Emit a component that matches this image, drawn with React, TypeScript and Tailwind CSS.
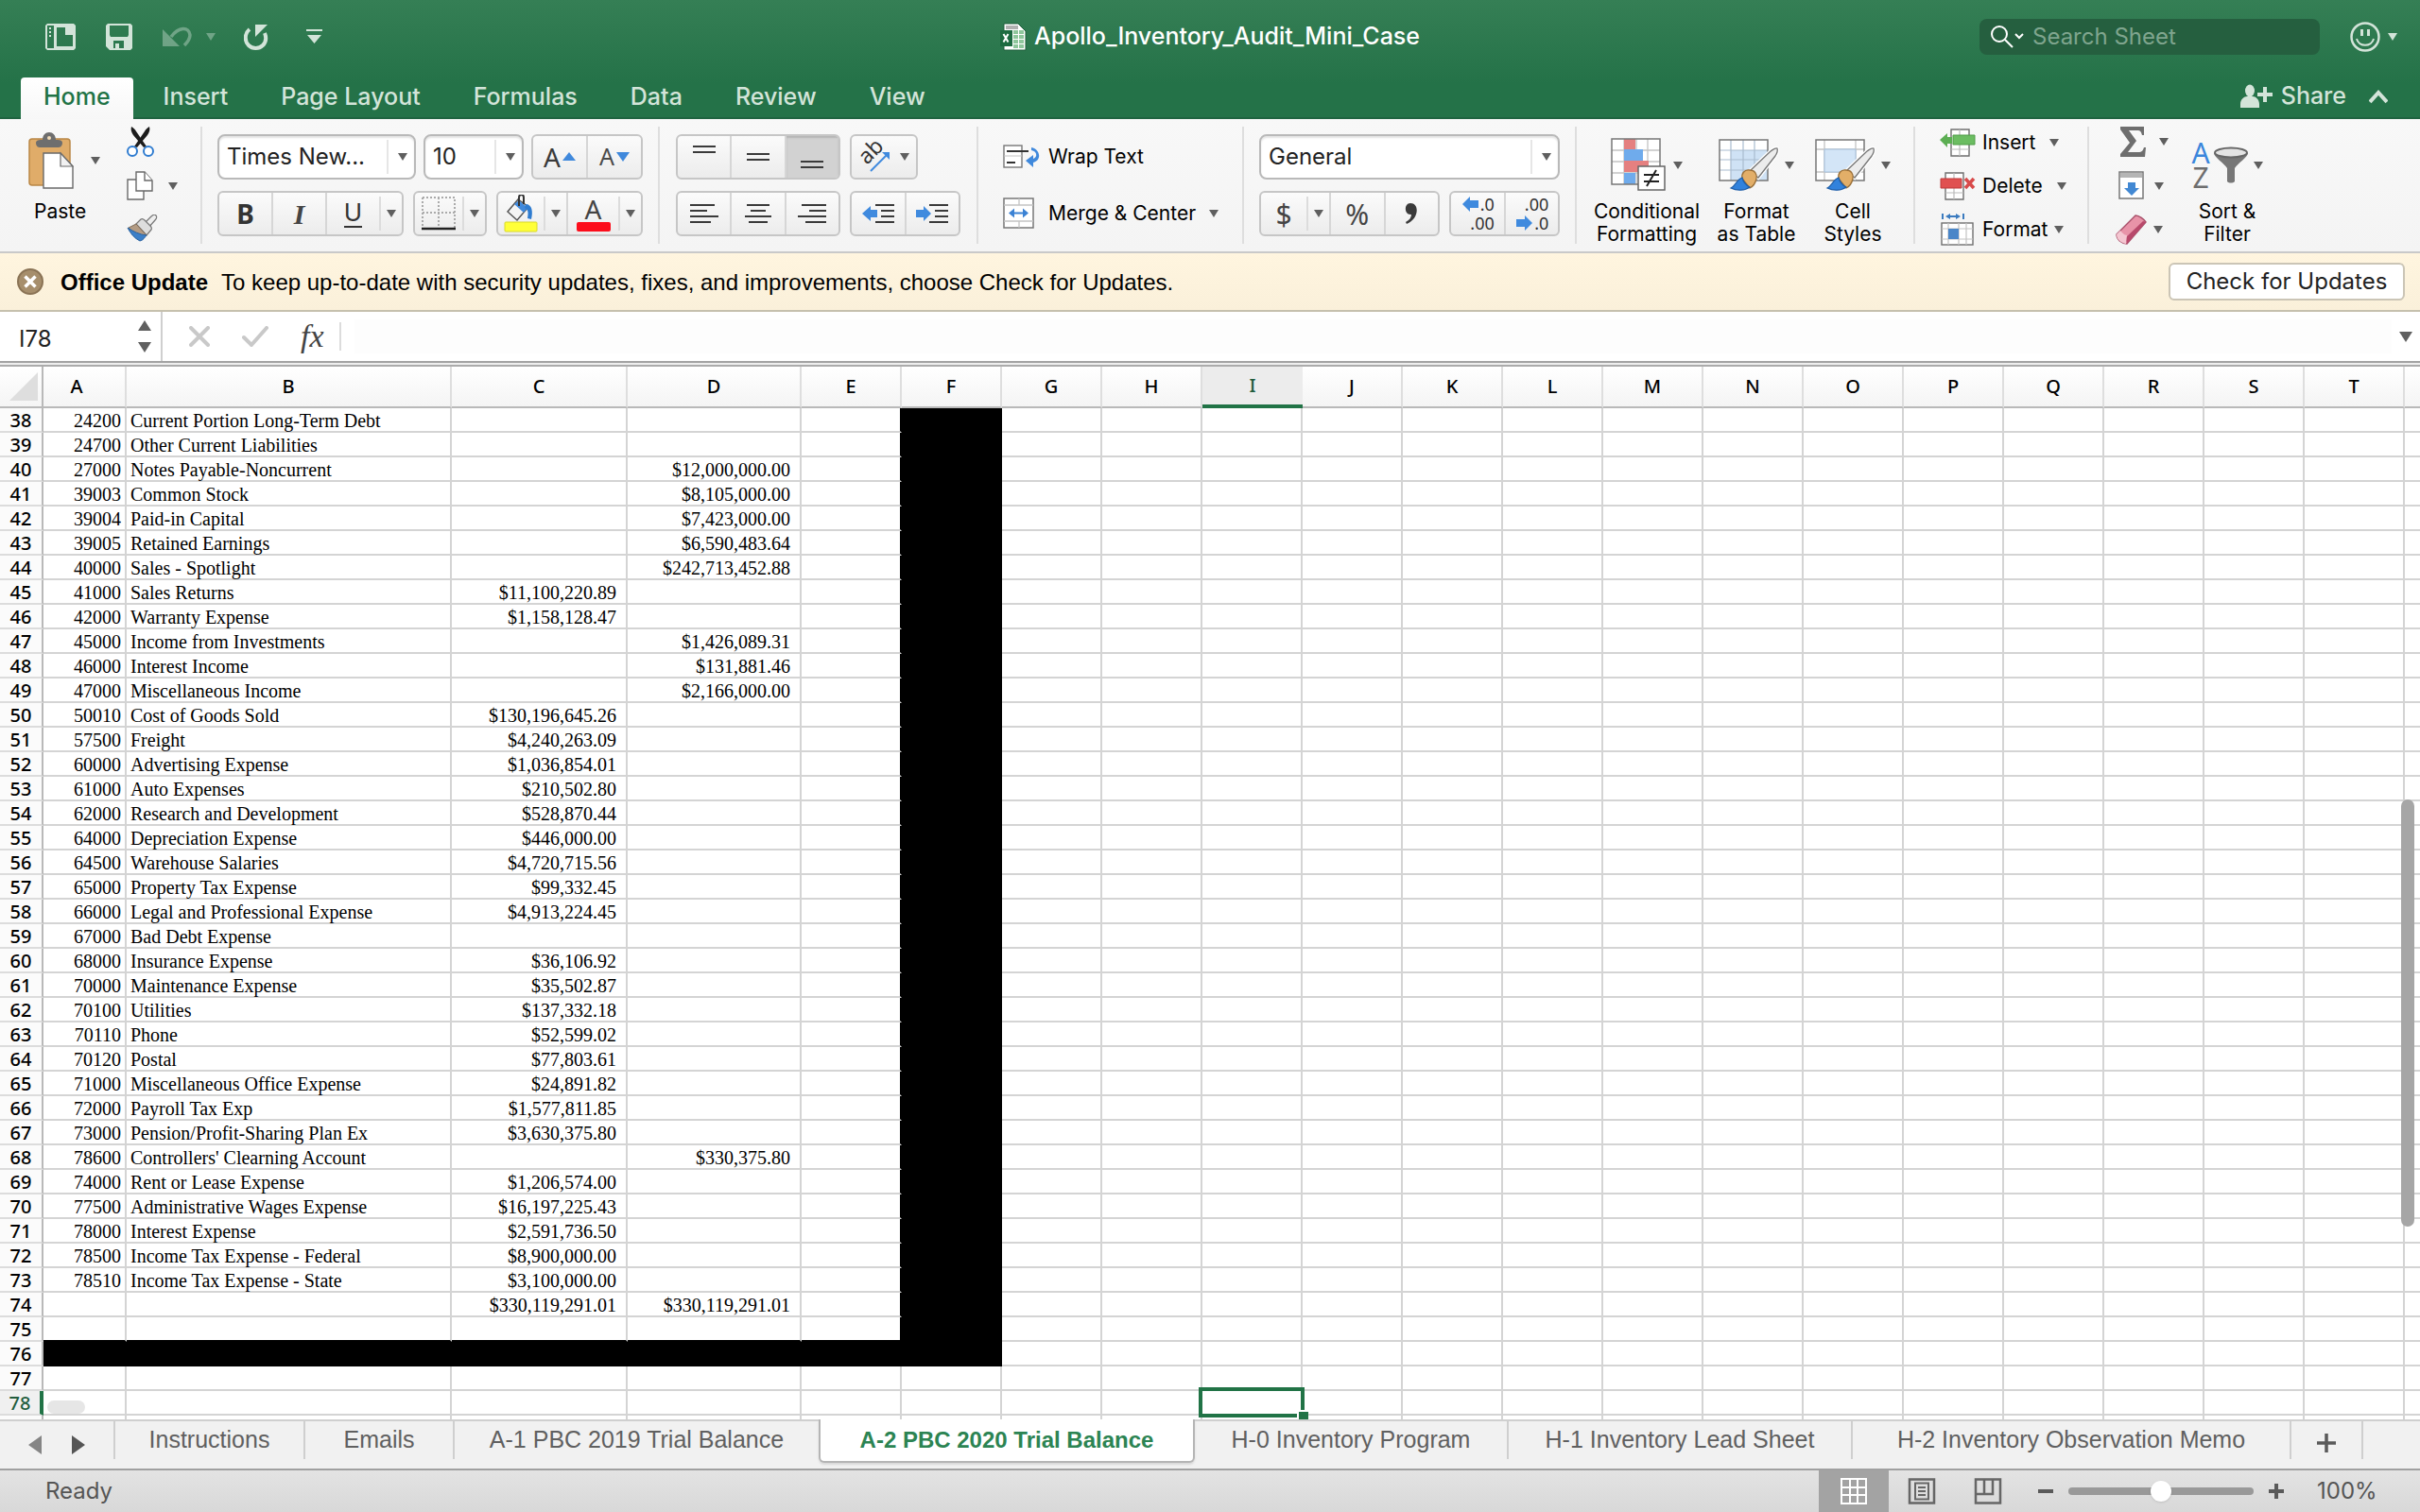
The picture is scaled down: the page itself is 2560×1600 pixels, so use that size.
import React from 'react';
import { clsx } from 'clsx';

type Row = { n: number; acct?: string; name?: string; debit?: string; credit?: string };

const rows: Row[] = [
  { n: 38, acct: '24200', name: 'Current Portion Long-Term Debt' },
  { n: 39, acct: '24700', name: 'Other Current Liabilities' },
  { n: 40, acct: '27000', name: 'Notes Payable-Noncurrent', credit: '$12,000,000.00' },
  { n: 41, acct: '39003', name: 'Common Stock', credit: '$8,105,000.00' },
  { n: 42, acct: '39004', name: 'Paid-in Capital', credit: '$7,423,000.00' },
  { n: 43, acct: '39005', name: 'Retained Earnings', credit: '$6,590,483.64' },
  { n: 44, acct: '40000', name: 'Sales - Spotlight', credit: '$242,713,452.88' },
  { n: 45, acct: '41000', name: 'Sales Returns', debit: '$11,100,220.89' },
  { n: 46, acct: '42000', name: 'Warranty Expense', debit: '$1,158,128.47' },
  { n: 47, acct: '45000', name: 'Income from Investments', credit: '$1,426,089.31' },
  { n: 48, acct: '46000', name: 'Interest Income', credit: '$131,881.46' },
  { n: 49, acct: '47000', name: 'Miscellaneous Income', credit: '$2,166,000.00' },
  { n: 50, acct: '50010', name: 'Cost of Goods Sold', debit: '$130,196,645.26' },
  { n: 51, acct: '57500', name: 'Freight', debit: '$4,240,263.09' },
  { n: 52, acct: '60000', name: 'Advertising Expense', debit: '$1,036,854.01' },
  { n: 53, acct: '61000', name: 'Auto Expenses', debit: '$210,502.80' },
  { n: 54, acct: '62000', name: 'Research and Development', debit: '$528,870.44' },
  { n: 55, acct: '64000', name: 'Depreciation Expense', debit: '$446,000.00' },
  { n: 56, acct: '64500', name: 'Warehouse Salaries', debit: '$4,720,715.56' },
  { n: 57, acct: '65000', name: 'Property Tax Expense', debit: '$99,332.45' },
  { n: 58, acct: '66000', name: 'Legal and Professional Expense', debit: '$4,913,224.45' },
  { n: 59, acct: '67000', name: 'Bad Debt Expense' },
  { n: 60, acct: '68000', name: 'Insurance Expense', debit: '$36,106.92' },
  { n: 61, acct: '70000', name: 'Maintenance Expense', debit: '$35,502.87' },
  { n: 62, acct: '70100', name: 'Utilities', debit: '$137,332.18' },
  { n: 63, acct: '70110', name: 'Phone', debit: '$52,599.02' },
  { n: 64, acct: '70120', name: 'Postal', debit: '$77,803.61' },
  { n: 65, acct: '71000', name: 'Miscellaneous Office Expense', debit: '$24,891.82' },
  { n: 66, acct: '72000', name: 'Payroll Tax Exp', debit: '$1,577,811.85' },
  { n: 67, acct: '73000', name: 'Pension/Profit-Sharing Plan Ex', debit: '$3,630,375.80' },
  { n: 68, acct: '78600', name: "Controllers' Clearning Account", credit: '$330,375.80' },
  { n: 69, acct: '74000', name: 'Rent or Lease Expense', debit: '$1,206,574.00' },
  { n: 70, acct: '77500', name: 'Administrative Wages Expense', debit: '$16,197,225.43' },
  { n: 71, acct: '78000', name: 'Interest Expense', debit: '$2,591,736.50' },
  { n: 72, acct: '78500', name: 'Income Tax Expense - Federal', debit: '$8,900,000.00' },
  { n: 73, acct: '78510', name: 'Income Tax Expense - State', debit: '$3,100,000.00' },
  { n: 74, debit: '$330,119,291.01', credit: '$330,119,291.01' },
  { n: 75 },
  { n: 76 },
  { n: 77 },
  { n: 78 },
];

const columns = 'ABCDEFGHIJKLMNOPQRST'.split('');
const columnWidths = [88, 344, 186, 184];
const menuTabs = ['Home', 'Insert', 'Page Layout', 'Formulas', 'Data', 'Review', 'View'];

const sheets = [
  { label: 'Instructions', width: 'w-[201px]' },
  { label: 'Emails', width: 'w-[158px]' },
  { label: 'A-1 PBC 2019 Trial Balance', width: 'w-[385px]' },
  { label: 'A-2 PBC 2020 Trial Balance', width: 'w-[398px]' },
  { label: 'H-0 Inventory Program', width: 'w-[332px]' },
  { label: 'H-1 Inventory Lead Sheet', width: 'w-[364px]' },
  { label: 'H-2 Inventory Observation Memo', width: 'w-[464px]' },
];

/* ---------- small pieces ---------- */

function Caret({ className = 'text-[#5f5f5f]' }: { className?: string }) {
  return (
    <svg width="10" height="8" viewBox="0 0 10 8" className={clsx('shrink-0', className)}>
      <path d="M0 0h10L5 8z" fill="currentColor" />
    </svg>
  );
}

function Sep() {
  return <div className="mt-2 h-[124px] w-0.5 shrink-0 bg-[#dedede]" />;
}

function Segments({ children, className }: { children: React.ReactNode; className?: string }) {
  return (
    <div className={clsx('flex h-12 shrink-0 overflow-hidden rounded-md border-2 border-[#c6c6c6] bg-linear-to-b from-[#fbfbfb] to-[#ececec]', className)}>
      {children}
    </div>
  );
}

interface SegProps {
  label: string;
  children: React.ReactNode;
  className?: string;
  first?: boolean;
  pressed?: boolean;
}

function Seg({ label, children, className = 'flex-1', first, pressed }: SegProps) {
  return (
    <button
      aria-label={label}
      className={clsx('flex min-w-0 items-center justify-center', !first && 'border-l-2 border-[#d6d6d6]', pressed && 'bg-[#d2d2d2] shadow-[inset_0_2px_2px_#b5b5b5]', className)}
    >
      {children}
    </button>
  );
}

function DropArrow({ label }: { label: string }) {
  return (
    <button aria-label={label} className="my-1 flex w-6 shrink-0 items-center justify-center border-l-2 border-[#dcdcdc]">
      <Caret />
    </button>
  );
}

function Combo({ label, value, className }: { label: string; value: string; className: string }) {
  return (
    <div className={clsx('relative h-12 shrink-0', className)}>
      <select
        aria-label={label}
        className="h-full w-full appearance-none rounded-lg border-2 border-[#b9b9b9] bg-white pl-2 text-[24px] text-[#222] shadow-[inset_0_2px_2px_#e4e4e4]"
      >
        <option>{value}</option>
      </select>
      <div className="pointer-events-none absolute inset-y-1.5 right-0 flex w-[31px] items-center justify-center border-l-2 border-[#e6e6e6]">
        <Caret />
      </div>
    </div>
  );
}

function Lines({ rows }: { rows: [number, number][] }) {
  return (
    <svg width="32" height="28" viewBox="0 0 32 28" stroke="#3a3a3a" strokeWidth="2">
      {rows.map(([x1, x2], i) => (
        <path key={i} d={`M${x1} ${5 + i * 6}H${x2}`} />
      ))}
    </svg>
  );
}

function VLines({ y }: { y: number }) {
  return (
    <svg width="24" height="40" viewBox="0 0 24 40" stroke="#3a3a3a" strokeWidth="2">
      <path d={`M0 ${y}h24M0 ${y + 6}h24`} />
    </svg>
  );
}

/* ---------- icons ---------- */

function PasteIcon() {
  return (
    <svg width="48" height="60" viewBox="0 0 48 60">
      <rect x="1" y="7" width="43" height="49" rx="3" fill="#e0ac69" stroke="#b98746" strokeWidth="1.5" />
      <path d="M8 11c0-2 2-3 5-3h2c0-5 3-8 7-8s7 3 7 8h2c3 0 5 1 5 3s-1 5-4 5H12c-3 0-4-3-4-5z" fill="#6e6e6e" />
      <circle cx="22" cy="6" r="2" fill="#f3dcb8" />
      <path d="M16 22h18l13 14v23H16z" fill="#fff" stroke="#6a6a6a" strokeWidth="1.4" />
      <path d="M34 22v14h13z" fill="#f2f2f2" stroke="#6a6a6a" strokeWidth="1.2" />
    </svg>
  );
}

function ScissorsIcon() {
  return (
    <svg width="30" height="32" viewBox="0 0 30 32">
      <path d="M5 0c2 1 4 3 5 5l11 16-3 1L7 9C5 6 4 3 5 0z" fill="#1c1c1c" />
      <path d="M24 0c-2 1-4 3-5 5L8 21l3 1L22 9c2-3 3-6 2-9z" fill="#1c1c1c" />
      <circle cx="6" cy="26" r="5" fill="#fff" stroke="#2f7cd0" strokeWidth="2" />
      <circle cx="23" cy="26" r="5" fill="#fff" stroke="#2f7cd0" strokeWidth="2" />
    </svg>
  );
}

function CopyIcon() {
  return (
    <svg width="28" height="31" viewBox="0 0 28 31" fill="#fff" stroke="#6a6a6a" strokeWidth="1.4">
      <path d="M1 9h17v21H1z" />
      <path d="M10 1h9l8 9v11H10z" />
      <path d="M19 1v9h8" />
    </svg>
  );
}

function PainterIcon() {
  return (
    <svg width="34" height="30" viewBox="0 0 34 30">
      <path d="M19 9l7-7c2-2 4-2 5-1s1 3-1 5l-7 8z" fill="#eee" stroke="#777" strokeWidth="1.2" />
      <path d="M10 10l5-5c2-1 3 0 4 1l6 6c1 1 2 3 1 4l-5 6z" fill="#ddd" stroke="#777" strokeWidth="1.2" />
      <path d="M10 10l11 12-4 2C11 21 6 18 2 14z" fill="#b39b83" stroke="#7d6b58" />
      <path d="M1 14c6 4 12 7 20 8-2 2-3 5-7 6C8 25 4 20 1 14z" fill="#3b7fc8" stroke="#2a62a0" />
    </svg>
  );
}

function BrushOverlay() {
  return (
    <g>
      <path d="M62 12c1 3 0 5-2 8L42 43l-9-7 22-21c3-2 5-4 7-3z" fill="#eee" stroke="#fff" strokeWidth="4" />
      <path d="M62 12c1 3 0 5-2 8L42 43l-9-7 22-21c3-2 5-4 7-3z" fill="#ececec" stroke="#777" strokeWidth="1.3" />
      <path d="M25 44c-1-5 2-10 8-9 5 0 8 4 7 9-1 5-3 8-7 10z" fill="#e2ae68" stroke="#9b7038" strokeWidth="1.3" />
      <path d="M25 43c1 4 4 8 8 10-5 4-14 4-20 1 5-2 6-9 12-11z" fill="#3182dc" stroke="#1f5ea8" strokeWidth="1.2" />
    </g>
  );
}

function ConditionalIcon() {
  return (
    <svg width="60" height="58" viewBox="0 0 60 58">
      <rect x="1" y="1" width="51" height="48" fill="#fff" />
      <path d="M14 1v48M39 1v48M27 1v48M1 13h51M1 25h51M1 37h51" stroke="#c4c4c4" strokeWidth="1.3" />
      <path d="M14 1h12v11H14zM14 24h26v12H14z" fill="#e58080" />
      <path d="M14 12h20v12H14zM14 37h12v12H14z" fill="#6fabec" />
      <rect x="1" y="1" width="51" height="48" fill="none" stroke="#777" strokeWidth="1.5" />
      <rect x="29" y="30" width="28" height="25" fill="#fff" stroke="#666" strokeWidth="1.5" />
      <path d="M35 39h16M35 46h16M48 34l-10 17" stroke="#222" strokeWidth="2" />
    </svg>
  );
}

function TableIcon() {
  return (
    <svg width="64" height="60" viewBox="0 0 64 60">
      <rect x="1" y="3" width="51" height="43" fill="#fff" />
      <path d="M13 14h39v32H13z" fill="#cfe2f5" />
      <path d="M13 3v43M26 3v43M38 3v43M1 14h51M1 24h51M1 35h51" stroke="#a9bccf" strokeWidth="1.2" />
      <rect x="1" y="3" width="51" height="43" fill="none" stroke="#777" strokeWidth="1.5" />
      <BrushOverlay />
    </svg>
  );
}

function StylesIcon() {
  return (
    <svg width="64" height="60" viewBox="0 0 64 60">
      <rect x="1" y="3" width="51" height="43" fill="#fff" />
      <path d="M10 3v43M43 3v43M1 13h51M1 37h51" stroke="#c4c4c4" strokeWidth="1.3" />
      <path d="M10 13h33v24H10z" fill="#d3e5f7" stroke="#a5c0dc" />
      <rect x="1" y="3" width="51" height="43" fill="none" stroke="#777" strokeWidth="1.5" />
      <BrushOverlay />
    </svg>
  );
}

function InsertCellsIcon() {
  return (
    <svg width="38" height="30" viewBox="0 0 38 30">
      <path d="M12 1h19v28H12z" fill="#fff" stroke="#6f6f6f" strokeWidth="1.4" />
      <path d="M21 1v28M12 22h19" stroke="#bbb" strokeWidth="1.2" />
      <path d="M0 12l8-7v4h5v7H8v4z" fill="#5cae53" />
      <path d="M14 7h23v10H14z" fill="#6cbd62" stroke="#4e9c46" />
    </svg>
  );
}

function DeleteCellsIcon() {
  return (
    <svg width="38" height="30" viewBox="0 0 38 30">
      <path d="M6 1h19v28H6z" fill="#fff" stroke="#6f6f6f" strokeWidth="1.4" />
      <path d="M15 1v28M6 22h19" stroke="#bbb" strokeWidth="1.2" />
      <path d="M1 7h22v10H1z" fill="#e05151" stroke="#bd3a3a" />
      <path d="M27 7l9 10M36 7l-9 10" stroke="#d84a4a" strokeWidth="3.5" />
    </svg>
  );
}

function FormatCellsIcon() {
  return (
    <svg width="38" height="34" viewBox="0 0 38 34">
      <path d="M3 0v6M25 0v6" stroke="#3b7bbf" strokeWidth="2" />
      <path d="M6 3l5-3v2h6V0l5 3-5 3V4h-6v2z" fill="#3b7bbf" />
      <rect x="2" y="10" width="33" height="23" fill="#fff" stroke="#6f6f6f" strokeWidth="1.4" />
      <path d="M9 10v23M20 10v23M28 10v23M2 16h33M2 27h33" stroke="#c4c4c4" strokeWidth="1.2" />
      <path d="M9 16h11v11H9z" fill="#4a86c8" />
    </svg>
  );
}

function FillDownIcon() {
  return (
    <svg width="28" height="31" viewBox="0 0 28 31">
      <rect x="1" y="1" width="25" height="28" fill="#fff" stroke="#777" strokeWidth="1.5" />
      <path d="M2 2h23v5H2z" fill="#b5b5b5" />
      <path d="M10 12h8v6h4l-8 8-8-8h4z" fill="#4288d3" />
    </svg>
  );
}

function EraserIcon() {
  return (
    <svg width="34" height="32" viewBox="0 0 34 32" strokeLinejoin="round">
      <path d="M1 21L21 1c4 0 9 4 11 7L12 31C7 31 1 27 1 21z" fill="#e893a8" stroke="#a8506a" strokeWidth="1.4" />
      <path d="M32 8L12 31l-2-6L29 7z" fill="#b8496b" />
      <path d="M1 21l4-4c2 2 4 5 7 5l-1 9C6 30 1 27 1 21z" fill="#f4c6d1" />
    </svg>
  );
}

function FunnelIcon() {
  return (
    <svg width="36" height="40" viewBox="0 0 36 40">
      <path d="M0 7c0 4 11 11 14 16v14c2 2 6 2 8 0V23c3-5 14-12 14-16z" fill="#777" />
      <ellipse cx="18" cy="6.5" rx="17" ry="5" fill="#e4e4e4" stroke="#666" strokeWidth="2" />
    </svg>
  );
}

function WrapIcon() {
  return (
    <svg width="40" height="28" viewBox="0 0 40 28">
      <rect x="1" y="2" width="19" height="23" fill="#fff" stroke="#777" strokeWidth="1.4" />
      <path d="M1 13h19" stroke="#c4c4c4" />
      <path d="M4 8h23" stroke="#333" strokeWidth="2" />
      <path d="M4 20h9" stroke="#333" strokeWidth="2" />
      <path d="M30 4c10 2 11 14 2 16v5l-8-7 8-6v4c5-2 4-8-2-9z" fill="#4089dc" />
    </svg>
  );
}

function MergeIcon() {
  return (
    <svg width="34" height="34" viewBox="0 0 34 34">
      <rect x="1" y="1" width="31" height="31" fill="#fff" stroke="#777" strokeWidth="1.5" />
      <path d="M1 8h31M1 25h31M17 1v7M17 25v7" stroke="#c4c4c4" strokeWidth="1.3" />
      <path d="M6 16.5l6-5v4h9v-4l6 5-6 5v-4h-9v4z" fill="#3b82d4" />
    </svg>
  );
}

function IndentIcon({ right }: { right?: boolean }) {
  return (
    <svg width="36" height="28" viewBox="0 0 36 28">
      <path d={right ? 'M17 14L9 6v4H1v8h8v4z' : 'M1 14l9-8v4h7v8h-7v4z'} fill="#3f8ade" />
      <path d="M15 5h20M21 11h14M21 17h14M15 23h20" stroke="#3a3a3a" strokeWidth="2" />
    </svg>
  );
}

function DecimalButton({ increase }: { increase?: boolean }) {
  return (
    <span className="flex w-9 flex-col items-end font-['Noto_Sans',sans-serif] text-[18px] leading-5 text-[#333]">
      {increase ? (
        <>
          <span className="flex items-center gap-0.5">
            <svg width="17" height="16" viewBox="0 0 17 16"><path d="M0 8l8-8v4h9v8H8v4z" fill="#3f8ade" /></svg>
            .0
          </span>
          <span>.00</span>
        </>
      ) : (
        <>
          <span>.00</span>
          <span className="flex items-center gap-0.5">
            <svg width="17" height="16" viewBox="0 0 17 16"><path d="M17 8L9 0v4H0v8h9v4z" fill="#3f8ade" /></svg>
            .0
          </span>
        </>
      )}
    </span>
  );
}

/* ---------- title bar and menu ---------- */

function TitleBar() {
  return (
    <div className="grid h-[78px] grid-cols-[1fr_auto_1fr] items-center text-[#d3e4d9]">
      <div className="flex items-center pl-12">
        <button aria-label="File gallery">
          <svg width="32" height="28" viewBox="0 0 32 28">
            <path fillRule="evenodd" d="M2 0h28l2 2v24l-2 2H2l-2-2V2zM2 2v24h7V2zM12 4v20h17V12h-8V4z" fill="currentColor" />
            <path d="M4 4h2v2H4zM4 8h2v2H4zM4 12h2v2H4zM23 3l6 7h-6z" fill="currentColor" />
          </svg>
        </button>
        <button aria-label="Save" className="ml-8">
          <svg width="28" height="28" viewBox="0 0 28 28">
            <path fillRule="evenodd" d="M2 0h24l2 2v24l-2 2H4l-4-4V2zM4 2v10l1 2h18l1-2V2zM8 18v8h2v-5h4v5h5v-8z" fill="currentColor" />
          </svg>
        </button>
        <button aria-label="Undo" className="ml-8 opacity-40">
          <svg width="32" height="22" viewBox="0 0 32 22">
            <path d="M0 3v18h18z" fill="currentColor" />
            <path d="M9 11C17 0 28 0 29 9c0 4-2 7-6 11" fill="none" stroke="currentColor" strokeWidth="3.5" />
          </svg>
        </button>
        <button aria-label="Undo history" className="ml-3.5 opacity-40">
          <Caret className="text-[#d3e4d9]" />
        </button>
        <button aria-label="Repeat" className="ml-[30px]">
          <svg width="26" height="28" viewBox="0 0 26 28">
            <path d="M6 6C0 11 1 19 5 23c4 4 11 4 15 0 3-3 4-8 2-13" fill="none" stroke="currentColor" strokeWidth="4" />
            <path d="M12 1h13l-4 4-9 9z" fill="currentColor" />
          </svg>
        </button>
        <button aria-label="Customize toolbar" className="ml-10">
          <svg width="17" height="16" viewBox="0 0 17 16" fill="currentColor">
            <path d="M0 0h17v2H0zM1 6h15l-7.5 9z" />
          </svg>
        </button>
      </div>
      <div className="flex items-center gap-2 text-[25px] font-medium text-white">
        <svg width="28" height="30" viewBox="0 0 28 30">
          <path d="M4 1h15l8 8v20H4z" fill="#fff" stroke="#1e5e3b" />
          <path d="M6 3h13v4H6z" fill="#b0b0b0" />
          <path d="M14 8h5v4h-5zM20 8h5v4h-5zM14 13h5v4h-5zM20 13h5v4h-5zM14 18h5v4h-5zM20 18h5v4h-5zM14 23h5v4h-5zM20 23h5v4h-5z" fill="#8fc79c" />
          <path d="M0 8h13v17H0z" fill="#1d6b40" />
          <path d="M3.5 12l5 8.5M8.5 12l-5 8.5" stroke="#fff" strokeWidth="2" />
        </svg>
        <h1>Apollo_Inventory_Audit_Mini_Case</h1>
      </div>
      <div className="flex items-center justify-end pr-6">
        <label className="flex h-[38px] w-[360px] items-center rounded-lg bg-[#255f3f] pl-3">
          <svg width="36" height="26" viewBox="0 0 36 26" fill="none" stroke="#fff" strokeWidth="2">
            <circle cx="9" cy="10" r="8" />
            <path d="M15 16l8 8M26 10l4 4 4-4" />
          </svg>
          <input
            aria-label="Search Sheet"
            placeholder="Search Sheet"
            className="ml-2 w-[290px] bg-transparent text-[24px] text-white placeholder:text-[#7fa58e]"
          />
        </label>
        <button aria-label="Feedback" className="ml-8 flex items-center gap-2">
          <svg width="32" height="32" viewBox="0 0 32 32" fill="none" stroke="currentColor">
            <circle cx="16" cy="16" r="14.5" strokeWidth="2.5" />
            <path d="M12.5 8v7M19.5 8v7" strokeWidth="3" />
            <path d="M7 18c2 9 16 9 18 0" strokeWidth="2" />
          </svg>
          <Caret className="text-[#d3e4d9]" />
        </button>
      </div>
    </div>
  );
}

function MenuBar() {
  return (
    <div className="flex h-12 items-end justify-between border-b-2 border-[#1f6340]">
      <nav className="-mb-0.5 flex gap-2 pl-[22px]">
        {menuTabs.map((tab) => (
          <button
            key={tab}
            className={clsx(
              'h-11 rounded-t-sm px-6 pb-1 text-[25px] leading-10 font-medium',
              tab === 'Home' ? 'bg-linear-to-b from-white to-[#f7f7f7] text-[#217346]' : 'text-[#d3e4d9]'
            )}
          >
            {tab}
          </button>
        ))}
      </nav>
      <div className="flex h-11 items-center gap-6 pr-[34px] text-[#d3e4d9]">
        <button className="flex items-center gap-2 text-[25px] font-medium">
          <svg width="35" height="26" viewBox="0 0 35 26" fill="currentColor">
            <ellipse cx="10" cy="7" rx="5" ry="6.5" />
            <path d="M0 25v-4c0-5 4-8 7-8h6c3 0 7 3 7 8v4zM18 9h6V3h4v6h6v4h-6v6h-4v-6h-6z" />
          </svg>
          Share
        </button>
        <button aria-label="Collapse ribbon">
          <svg width="20" height="16" viewBox="0 0 20 16" fill="none" stroke="currentColor" strokeWidth="4">
            <path d="M1 14l9-10 9 10" />
          </svg>
        </button>
      </div>
    </div>
  );
}

/* ---------- ribbon ---------- */

function BigButton({ icon, lines, className }: { icon: React.ReactNode; lines: string[]; className: string }) {
  return (
    <button className={clsx('flex shrink-0 flex-col items-center leading-6', className)}>
      <span className="flex h-[74px] items-center gap-1.5">
        {icon}
        <Caret />
      </span>
      {lines.map((line) => (
        <span key={line} className="whitespace-nowrap">{line}</span>
      ))}
    </button>
  );
}

function Ribbon() {
  return (
    <div className="flex h-[142px] border-b-2 border-[#c9c9c9] bg-linear-to-b from-[#f8f8f8] to-[#f4f4f4] text-[21px] text-black">
      <div className="flex w-[212px] shrink-0 pl-[30px]">
        <button className="flex w-[76px] flex-col items-start pt-3.5">
          <span className="flex items-center gap-[18px]">
            <PasteIcon />
            <Caret />
          </span>
          <span className="mt-2.5 pl-1.5 leading-7">Paste</span>
        </button>
        <div className="ml-7 flex flex-col items-start gap-[15px] pt-2">
          <button aria-label="Cut"><ScissorsIcon /></button>
          <button aria-label="Copy" className="flex items-center gap-4">
            <CopyIcon />
            <Caret />
          </button>
          <button aria-label="Format painter"><PainterIcon /></button>
        </div>
      </div>
      <Sep />
      <div className="flex w-[482px] shrink-0 flex-col gap-3 pt-4 pl-4">
        <div className="flex gap-2">
          <Combo label="Font" value="Times New..." className="w-[210px]" />
          <Combo label="Font size" value="10" className="w-[106px]" />
          <Segments className="w-[118px]">
            <Seg first label="Increase font size" className="flex-1 gap-0.5">
              <span className="font-['Noto_Sans',sans-serif] text-[28px] text-[#3a3a3a]">A</span>
              <svg width="14" height="10" viewBox="0 0 14 10"><path d="M0 9l7-9 7 9z" fill="#4089dc" /></svg>
            </Seg>
            <Seg label="Decrease font size" className="flex-1 gap-0.5">
              <span className="font-['Noto_Sans',sans-serif] text-[25px] text-[#4a4a4a]">A</span>
              <svg width="14" height="10" viewBox="0 0 14 10"><path d="M0 0h14L7 10z" fill="#4089dc" /></svg>
            </Seg>
          </Segments>
        </div>
        <div className="flex gap-2.5">
          <Segments className="w-[197px]">
            <Seg first label="Bold" className="flex-1 font-['Noto_Sans',sans-serif] text-[28px] font-bold text-[#333]">B</Seg>
            <Seg label="Italic" className="flex-1 font-['Liberation_Serif',serif] text-[30px] font-bold text-[#444] italic">I</Seg>
            <Seg label="Underline" className="flex-1 text-[26px] text-[#333]">
              <span className="border-b-2 border-[#333] leading-7">U</span>
            </Seg>
            <DropArrow label="Underline style" />
          </Segments>
          <Segments className="w-[78px]">
            <Seg first label="Borders">
              <svg width="36" height="36" viewBox="0 0 36 36" fill="none">
                <path d="M1 1h34v32M1 1v32M18 1v32M1 17h34" stroke="#aaa" strokeWidth="2" strokeDasharray="2 2" />
                <path d="M0 34h36" stroke="#222" strokeWidth="2.5" />
              </svg>
            </Seg>
            <DropArrow label="Border style" />
          </Segments>
          <Segments className="w-[155px]">
            <Seg first label="Fill color" className="w-12 shrink-0">
              <svg width="36" height="40" viewBox="0 0 36 40">
                <path d="M15 5L4 18l10 9 12-14z" fill="#f4f4f4" stroke="#555" strokeWidth="1.5" />
                <path d="M11 10l10 9 4-5-9-8z" fill="#4089dc" />
                <path d="M16 12V3c0-4 5-4 5 0v7" fill="none" stroke="#333" strokeWidth="2" />
                <path d="M23 10c7 0 8 8 6 16l-4-1c1-6 1-9-3-11z" fill="#2f7cd0" />
                <rect x="1" y="29" width="34" height="10" rx="1" fill="#ffff38" stroke="#d9d92a" />
              </svg>
            </Seg>
            <DropArrow label="Fill color options" />
            <Seg label="Font color">
              <span className="flex flex-col items-center">
                <span className="font-['Noto_Sans',sans-serif] text-[28px] leading-7 text-[#444]">A</span>
                <span className="h-2.5 w-9 rounded-xs bg-[#fc0d1b]" />
              </span>
            </Seg>
            <DropArrow label="Font color options" />
          </Segments>
        </div>
      </div>
      <Sep />
      <div className="flex w-[335px] shrink-0 flex-col gap-3 pt-4 pl-[17px]">
        <div className="flex gap-2.5">
          <Segments className="w-[174px]">
            <Seg first label="Top align"><VLines y={9} /></Seg>
            <Seg label="Middle align"><VLines y={17} /></Seg>
            <Seg label="Bottom align" pressed><VLines y={25} /></Seg>
          </Segments>
          <Segments className="w-[72px]">
            <Seg first label="Orientation" className="flex-1 gap-2.5">
              <svg width="34" height="34" viewBox="0 0 34 34" className="font-['Noto_Sans',sans-serif]">
                <text x="0" y="0" transform="translate(9 26) rotate(-45)" fontSize="23" fill="#333">ab</text>
                <path d="M13 32L30 15" stroke="#3f8ade" strokeWidth="2" />
                <path d="M25 12h8v8z" fill="#3f8ade" />
              </svg>
              <Caret />
            </Seg>
          </Segments>
        </div>
        <div className="flex gap-2.5">
          <Segments className="w-[174px]">
            <Seg first label="Align left"><Lines rows={[[1, 27], [1, 19], [1, 31], [1, 23]]} /></Seg>
            <Seg label="Center"><Lines rows={[[4, 28], [8, 24], [2, 30], [6, 26]]} /></Seg>
            <Seg label="Align right"><Lines rows={[[5, 31], [13, 31], [1, 31], [9, 31]]} /></Seg>
          </Segments>
          <Segments className="w-[117px]">
            <Seg first label="Decrease indent"><IndentIcon /></Seg>
            <Seg label="Increase indent"><IndentIcon right /></Seg>
          </Segments>
        </div>
      </div>
      <Sep />
      <div className="flex w-[279px] shrink-0 flex-col items-start gap-3 pt-4 pl-[26px]">
        <button className="flex h-12 items-center gap-2">
          <WrapIcon />
          Wrap Text
        </button>
        <button className="flex h-12 items-center gap-3.5 whitespace-nowrap">
          <MergeIcon />
          Merge & Center
          <Caret />
        </button>
      </div>
      <Sep />
      <div className="flex w-[350px] shrink-0 flex-col gap-3 pt-4 pl-4">
        <Combo label="Number format" value="General" className="w-[318px]" />
        <div className="flex gap-2.5">
          <Segments className="w-[191px] font-['Noto_Sans',sans-serif] text-[30px] text-[#444]">
            <Seg first label="Currency" className="w-12 shrink-0">$</Seg>
            <DropArrow label="Currency options" />
            <Seg label="Percent">%</Seg>
            <Seg label="Comma style">
              <svg width="14" height="24" viewBox="0 0 14 24">
                <path d="M6 1c10 0 9 17-4 22l-1-2c4-2 6-5 6-8C-1 14-1 1 6 1z" fill="#3a3a3a" />
              </svg>
            </Seg>
          </Segments>
          <Segments className="w-[117px]">
            <Seg first label="Increase decimal"><DecimalButton increase /></Seg>
            <Seg label="Decrease decimal"><DecimalButton /></Seg>
          </Segments>
        </div>
      </div>
      <Sep />
      <div className="flex w-[356px] shrink-0 justify-between pt-3 pr-4 pl-3">
        <BigButton icon={<ConditionalIcon />} lines={['Conditional', 'Formatting']} className="w-[124px]" />
        <BigButton icon={<TableIcon />} lines={['Format', 'as Table']} className="w-[96px]" />
        <BigButton icon={<StylesIcon />} lines={['Cell', 'Styles']} className="w-[96px]" />
      </div>
      <Sep />
      <div className="flex w-[182px] shrink-0 flex-col items-start pt-0.5 pl-[26px]">
        <button className="flex h-[46px] items-center gap-[7px]">
          <InsertCellsIcon />
          Insert
          <span className="pl-2"><Caret /></span>
        </button>
        <button className="flex h-[46px] items-center gap-[7px]">
          <DeleteCellsIcon />
          Delete
          <span className="pl-2"><Caret /></span>
        </button>
        <button className="flex h-[46px] items-center gap-[7px]">
          <FormatCellsIcon />
          Format
          <Caret />
        </button>
      </div>
      <Sep />
      <div className="flex pl-7">
        <div className="flex w-[78px] flex-col items-start gap-[15px] pt-2">
          <button aria-label="AutoSum" className="flex items-center gap-3.5 pl-1">
            <svg width="28" height="32" viewBox="0 0 28 32">
              <path d="M1 0h25v9h-2c-1-4-2-5-5-5H10l8 11-9 12h11c4 0 5-2 6-5h2l-1 10H1v-3l10-12L1 3z" fill="#6e6e6e" />
            </svg>
            <Caret />
          </button>
          <button aria-label="Fill" className="flex items-center gap-2.5 pl-[3px]">
            <FillDownIcon />
            <Caret />
          </button>
          <button aria-label="Clear" className="flex items-center gap-1.5">
            <EraserIcon />
            <Caret />
          </button>
        </div>
        <button className="flex w-[80px] flex-col items-center pt-3 leading-6">
          <span className="flex h-[74px] items-center">
            <span className="flex flex-col items-center font-['Noto_Sans',sans-serif] text-[30px] leading-[26px]">
              <span className="text-[#3b86dc]">A</span>
              <span className="text-[#6e6e6e]">Z</span>
            </span>
            <span className="pr-1.5 pl-1"><FunnelIcon /></span>
            <Caret />
          </span>
          <span className="whitespace-nowrap">Sort &</span>
          <span>Filter</span>
        </button>
      </div>
    </div>
  );
}

/* ---------- bars above the grid ---------- */

function UpdateBar() {
  return (
    <div className="flex h-[62px] items-center border-b-2 border-[#c6c1ae] bg-linear-to-b from-[#fff5df] to-[#faf0da] pr-4 pl-[18px] font-['Liberation_Sans',sans-serif] text-[24px] text-black">
      <button aria-label="Dismiss">
        <svg width="28" height="28" viewBox="0 0 28 28">
          <circle cx="14" cy="14" r="13" fill="#a68e6c" stroke="#8a7355" strokeWidth="2" />
          <path d="M8.5 8.5l11 11M19.5 8.5l-11 11" stroke="#fff" strokeWidth="3.5" />
        </svg>
      </button>
      <strong className="ml-[18px] pt-0.5">Office Update</strong>
      <span className="ml-3.5 flex-1 pt-0.5">To keep up-to-date with security updates, fixes, and improvements, choose Check for Updates.</span>
      <button className="h-10 w-[250px] rounded-md border-2 border-[#cbc5b6] bg-white font-['Inter',sans-serif] text-[#222]">Check for Updates</button>
    </div>
  );
}

function FormulaBar() {
  return (
    <div className="flex h-[58px] border-b-2 border-[#ababab] bg-[#eee]">
      <div className="flex h-[54px] w-full items-center border-b-2 border-[#a3a3a3] bg-white">
        <div className="flex h-full w-[172px] items-center border-r-2 border-[#cfcfcf] pl-5">
          <input aria-label="Name box" defaultValue="I78" className="w-[126px] bg-transparent pt-1.5 text-[24px] text-[#222]" />
          <svg width="14" height="34" viewBox="0 0 14 34" fill="#606060">
            <path d="M0 11h14L7 0zM0 23h14l-7 11z" />
          </svg>
        </div>
        <button aria-label="Cancel" className="ml-7">
          <svg width="22" height="22" viewBox="0 0 22 22" stroke="#c9c9c9" strokeWidth="4" strokeLinecap="round">
            <path d="M2 2l18 18M20 2L2 20" />
          </svg>
        </button>
        <button aria-label="Enter" className="ml-[34px]">
          <svg width="28" height="22" viewBox="0 0 28 22" fill="none" stroke="#c9c9c9" strokeWidth="4" strokeLinecap="round">
            <path d="M2 12l8 8L26 2" />
          </svg>
        </button>
        <button aria-label="Insert function" className="ml-[34px] font-['Liberation_Serif',serif] text-[34px] leading-8 text-[#444] italic">fx</button>
        <div className="ml-4 h-[30px] w-0.5 bg-[#dcdcdc]" />
        <input aria-label="Formula" className="ml-3.5 h-9 flex-1 bg-[#fdfdfd] px-2 text-[24px]" />
        <button aria-label="Expand formula bar" className="mx-2">
          <svg width="14" height="11" viewBox="0 0 14 11"><path d="M0 0h14L7 11z" fill="#606060" /></svg>
        </button>
      </div>
    </div>
  );
}

/* ---------- grid ---------- */

function isBlack(row: number, col: string) {
  return (col === 'F' && row <= 76) || (row === 76 && col <= 'F');
}

function Grid() {
  return (
    <div className="relative min-h-0 flex-1 overflow-hidden bg-white">
      <table className="w-full table-fixed border-separate border-spacing-0">
        <colgroup>
          <col style={{ width: 46 }} />
          {columns.map((col, i) => (
            <col key={col} style={{ width: columnWidths[i] ?? 106 }} />
          ))}
          <col />
        </colgroup>
        <thead>
          <tr className="h-11 bg-linear-to-b from-white to-[#f4f4f4] font-['Noto_Sans',sans-serif] text-[20px] text-black">
            <th aria-label="Select all" className="border-r-2 border-b-2 border-[#b9b9b9] p-0">
              <svg width="30" height="30" viewBox="0 0 30 30" className="ml-2.5"><path d="M30 0v30H0z" fill="#dedede" /></svg>
            </th>
            {columns.map((col) => (
              <th
                key={col}
                className={clsx(
                  'p-0 font-medium',
                  col === 'I' ? 'border-b-4 border-[#217346] bg-[#ececec] text-[#215c3c]' : 'border-r-2 border-b-2 border-r-[#dedede] border-b-[#b9b9b9]',
                  col === 'A' && 'pr-4'
                )}
              >
                {col}
              </th>
            ))}
            <th className="border-b-2 border-[#b9b9b9]" />
          </tr>
        </thead>
        <tbody className="font-['Liberation_Serif',serif] text-[20px] leading-[22px] text-black">
          {rows.map((row) => {
            const values: Record<string, string | undefined> = { A: row.acct, B: row.name, C: row.debit, D: row.credit };
            return (
              <tr key={row.n} className="h-[26px]">
                <th
                  className={clsx(
                    "border-b-2 border-b-[#dcdcdc] px-0 pt-0.5 pb-0 font-['Noto_Sans',sans-serif] font-medium",
                    row.n === 78 ? 'border-r-4 border-r-[#217346] bg-[#f0f0f0] text-[#215c3c]' : 'border-r-2 border-r-[#b9b9b9] bg-[#fbfbfb]'
                  )}
                >
                  {row.n}
                </th>
                {columns.map((col) => {
                  const black = isBlack(row.n, col);
                  const selected = row.n === 78 && col === 'I';
                  return (
                    <td
                      key={col}
                      className={clsx(
                        'border-r-2 border-b-2 pb-0 whitespace-nowrap',
                        selected ? 'pt-0' : 'pt-0.5',
                        col === 'A' && 'pr-1 pl-0 text-right',
                        col === 'B' && 'pr-0 pl-1',
                        (col === 'C' || col === 'D') && 'pr-2.5 pl-0 text-right',
                        col > 'D' && 'px-0',
                        black && 'bg-black',
                        black || (col === 'E' && row.n <= 76) ? 'border-r-black' : 'border-r-[#d4d4d4]',
                        black || (row.n === 75 && col < 'F') ? 'border-b-black' : 'border-b-[#d4d4d4]'
                      )}
                    >
                      {values[col]}
                      {selected && (
                        <div className="relative h-6">
                          <div className="absolute -top-1 -left-1 h-8 w-28 border-4 border-[#217346]" />
                          <div className="absolute top-5 left-[100px] h-3 w-3 border-t-2 border-l-2 border-white bg-[#217346]" />
                        </div>
                      )}
                    </td>
                  );
                })}
                <td className="border-b-2 border-[#d4d4d4] p-0" />
              </tr>
            );
          })}
          {/* top edge of row 79, cut off by the sheet tabs */}
          <tr className="h-[26px]">
            <th className="border-r-2 border-[#b9b9b9] bg-[#fbfbfb]" />
            {columns.map((col) => (
              <td key={col} className="border-r-2 border-[#d4d4d4]" />
            ))}
            <td />
          </tr>
        </tbody>
      </table>
      <div className="absolute top-[458px] right-1.5 h-[452px] w-3.5 rounded-full bg-[#a6a6a6]" />
      <div className="absolute bottom-1.5 left-[50px] h-3.5 w-10 rounded-full bg-[#e6e6e6]" />
    </div>
  );
}

/* ---------- bottom bars ---------- */

function SheetTabs() {
  return (
    <div className="flex h-[54px] shrink-0 border-t-2 border-b-2 border-t-[#cfcfcf] border-b-[#a0a0a0] bg-[#f1f1f1] font-['Liberation_Sans',sans-serif] text-[25px] text-[#606060]">
      <div className="flex h-10 w-[122px] shrink-0 items-center gap-8 border-r-2 border-[#cfcfcf] pt-2.5 pl-[30px]">
        <button aria-label="Previous sheet">
          <svg width="14" height="20" viewBox="0 0 14 20"><path d="M14 0v20L0 10z" fill="#858585" /></svg>
        </button>
        <button aria-label="Next sheet">
          <svg width="14" height="20" viewBox="0 0 14 20"><path d="M0 0v20l14-10z" fill="#555" /></svg>
        </button>
      </div>
      {sheets.map((sheet, i) =>
        i === 3 ? (
          <button
            key={sheet.label}
            className={clsx('-mt-0.5 h-[46px] shrink-0 rounded-b-md border-x-2 border-b-2 border-[#b5b5b5] bg-white text-[24px] font-bold text-[#2c8453] shadow-[0_2px_2px_#d9d9d9]', sheet.width)}
          >
            {sheet.label}
          </button>
        ) : (
          <button
            key={sheet.label}
            className={clsx('h-10 shrink-0 whitespace-nowrap', i !== 2 && 'border-r-2 border-[#cfcfcf]', sheet.width)}
          >
            {sheet.label}
          </button>
        )
      )}
      <button aria-label="Add sheet" className="flex h-10 w-[76px] shrink-0 items-center justify-center border-r-2 border-[#cfcfcf] pt-1.5">
        <svg width="20" height="20" viewBox="0 0 20 20" stroke="#5a5a5a" strokeWidth="3.5"><path d="M10 0v20M0 10h20" /></svg>
      </button>
    </div>
  );
}

function StatusBar() {
  return (
    <div className="flex h-11 shrink-0 items-center bg-linear-to-b from-[#e3e3e3] to-[#d8d8d8] pr-[45px] pl-12 text-[24px] text-[#555]">
      <span className="flex-1">Ready</span>
      <button aria-label="Normal view" className="flex h-full w-[74px] items-center justify-center bg-[#a3a3a3]">
        <svg width="28" height="28" viewBox="0 0 28 28" fill="none" stroke="#fff" strokeWidth="2">
          <path d="M1 1h26v26H1zM10 1v26M18 1v26M1 10h26M1 18h26" />
        </svg>
      </button>
      <button aria-label="Page layout view" className="ml-5">
        <svg width="30" height="28" viewBox="0 0 30 28" fill="none" stroke="#666" strokeWidth="2.5">
          <path d="M2 1.5h26v25H2z" />
          <path d="M8 5.5h14v17H8z" strokeWidth="2" />
          <path d="M11 10h8M11 14h8M11 18h8" strokeWidth="2" />
        </svg>
      </button>
      <button aria-label="Page break view" className="ml-10">
        <svg width="30" height="28" viewBox="0 0 30 28" fill="none" stroke="#666" strokeWidth="2.5">
          <path d="M2 1.5h26v25H2zM2 17h18V1M11 1v16" />
        </svg>
      </button>
      <button aria-label="Zoom out" className="ml-[38px]">
        <svg width="16" height="16" viewBox="0 0 16 16" stroke="#5a5a5a" strokeWidth="4"><path d="M0 8h16" /></svg>
      </button>
      <input
        type="range"
        aria-label="Zoom"
        defaultValue={50}
        className="mx-4 h-2 w-[196px] appearance-none rounded-full bg-[#999] [&::-webkit-slider-thumb]:h-[22px] [&::-webkit-slider-thumb]:w-[22px] [&::-webkit-slider-thumb]:appearance-none [&::-webkit-slider-thumb]:rounded-full [&::-webkit-slider-thumb]:bg-white [&::-webkit-slider-thumb]:shadow"
      />
      <button aria-label="Zoom in">
        <svg width="16" height="16" viewBox="0 0 16 16" stroke="#5a5a5a" strokeWidth="4"><path d="M0 8h16M8 0v16" /></svg>
      </button>
      <span className="ml-[35px] w-16 whitespace-nowrap">100%</span>
    </div>
  );
}

export default function App() {
  return (
    <div className="flex h-screen w-full flex-col overflow-hidden bg-white font-['Inter',sans-serif]">
      <header className="bg-linear-to-b from-[#357f55] to-[#247248] to-70%">
        <TitleBar />
        <MenuBar />
      </header>
      <Ribbon />
      <UpdateBar />
      <FormulaBar />
      <Grid />
      <SheetTabs />
      <StatusBar />
    </div>
  );
}
